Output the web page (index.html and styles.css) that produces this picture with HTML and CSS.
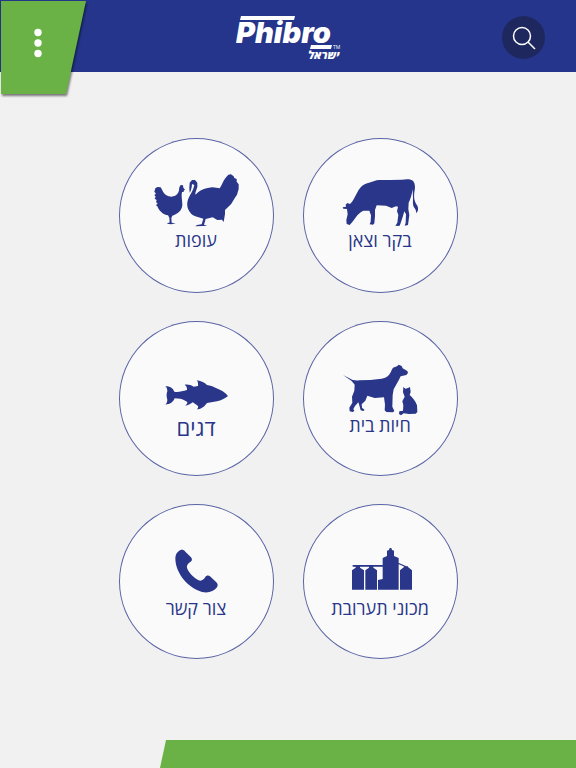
FILE: index.html
```html
<!DOCTYPE html>
<html lang="he" dir="rtl">
<head>
<meta charset="utf-8">
<meta name="viewport" content="width=device-width, initial-scale=1">
<title>Phibro ישראל</title>
<link rel="stylesheet" href="styles.css">
</head>
<body>
<header class="bar">
  <a class="logo" href="#">
    <svg width="108" height="52" viewBox="0 0 108 52" direction="ltr">
      <path d="M7 6H61L60 10H6ZM77 35H98L97 39H76Z"/>
      <text class="logo-name" x="2" y="33">Phibro</text>
      <text class="logo-tm" x="99" y="39">TM</text>
      <text class="logo-country" x="74" y="49">ישראל</text>
    </svg>
  </a>
  <div class="menu">
    <button class="menu-button" type="button" aria-label="תפריט">
      <svg width="8" height="30" viewBox="0 0 8 30"><circle cx="4" cy="4.500" r="3.700"/><circle cx="4" cy="15" r="3.700"/><circle cx="4" cy="25.500" r="3.700"/></svg>
    </button>
  </div>
  <button class="search" type="button" aria-label="חיפוש">
    <svg width="24" height="24" viewBox="0 0 24 24"><circle cx="10" cy="10" r="8.500"/><path d="M16 16L23 23"/></svg>
  </button>
</header>
<main>
  <nav class="tiles">
    <a class="tile" href="#">
      <svg viewBox="-82 -81 465 276"><path d="M37 127L47 125L46 119L51 114L59 117C68 109 74 94 82 80C90 65 100 56 116 53L139 46C151 43 164 46 178 45L215 44C228 42 242 41 249 49C255 57 255 69 252 82C250 96 252 108 257 116C263 123 265 132 262 138L258 145L256 134L250 125C247 117 248 107 248 98L247 73C244 92 240 103 235 113L234 132L237 150L233 180L223 182L226 173L227 148L222 139L217 156L210 177L207 183L195 182L201 173L204 149L200 139L203 125L197 124L184 129L167 122L139 121L134 135L134 153L132 175L128 179L118 178L121 170L122 151L117 137L99 137C91 141 87 145 81 151L66 171L58 180L49 177L48 165L52 148L50 132L39 131Z"/></svg>
      <span class="label">בקר וצאן</span>
    </a>
    <a class="tile" href="#">
      <svg viewBox="-78 -81 465 276"><path d="M28 80L31 70L37 66L47 67L52 76C57 89 68 95 80 95C92 94 100 87 102 76L103 67L107 60L114 61L115 68L120 74L116 77L116 81L111 81C108 93 112 106 112 120C111 137 98 147 82 152L79 159L80 173L92 175L79 178L65 176L74 172L73 158L69 151C54 149 43 139 37 124L33 121L38 115L33 112L35 105L29 101L32 95L28 90L33 86ZM133 70L134 53L141 45L150 45L157 53L157 66L151 84L152 89C164 75 184 68 203 67L224 70C231 60 234 48 242 38L250 29L258 28L266 34L268 39L275 42L275 50L281 58L281 72L276 89L269 100L258 118L240 135L240 147L236 171L231 164L217 165L203 157L182 162L177 179L187 182L172 183L151 184L156 180L170 178L175 161L151 154C132 146 123 125 128 107C130 96 140 84 145 71L148 60L141 57L140 67L137 78L134 83Z"/></svg>
      <span class="label">עופות</span>
    </a>
    <a class="tile low" href="#">
      <svg viewBox="-82 -102 465 276"><path d="M38 60L57 70C66 76 76 78 87 76L120 75L154 71C169 69 179 60 184 45L188 38L200 34L205 29L214 33L217 40L231 48L233 54L228 60L211 64L205 76L190 103L187 120L186 155L192 168L188 172L168 171L163 166L164 149L161 127L133 129L111 122L105 137L94 148L95 158L103 165L99 168L91 166L86 148L84 142L74 153L69 162L72 168L67 171L58 169L57 158L66 143L65 125L72 107L73 89L64 78ZM219 96L225 101L233 99L239 96L241 111L238 120C246 127 256 138 260 151L261 171L256 176L236 177L220 175L212 181L206 177L207 169L218 167L219 151L216 139L223 125L218 112Z"/></svg>
      <span class="label">חיות בית</span>
    </a>
    <a class="tile low" href="#">
      <svg viewBox="-93 -147 465 276"><path d="M46 48C60 49 69 54 73 65C85 67 97 64 111 60C112 53 109 48 104 44C115 43 124 45 131 50L144 48C145 42 144 36 141 31C154 33 164 38 171 45C181 47 188 49 196 53C213 59 226 67 234 78C225 86 213 91 201 94L171 99C166 106 161 111 156 113C151 116 146 118 141 118C144 115 145 111 144 108C139 104 133 101 128 97C121 103 114 106 105 107C110 104 112 101 112 96C105 91 98 87 91 86L74 85C70 96 60 103 46 104C50 100 52 95 52 89C49 80 49 72 52 64C52 57 50 52 46 48Z"/></svg>
      <span class="label large">דגים</span>
    </a>
    <a class="tile low" href="#">
      <svg viewBox="-52 -108 465 276"><path d="M95 149V91L106 83V79H119V83L131 91V149ZM135 149V91L146 83V79H159V83L170 91V149ZM173 149V120L187 117V54L200 48V32L206 30L208 24H213L215 30L221 32V48L235 54V149ZM239 149V91L251 81V79H263V81L275 91V149ZM97 75H188V80H97ZM234 68L258 79L256 82L234 72Z"/></svg>
      <span class="label">מכוני תערובת</span>
    </a>
    <a class="tile low" href="#">
      <svg viewBox="-108 -108 465 276"><path d="M61 55C61 44 66 37 75 31C81 28 87 30 91 35L108 52C112 57 112 62 107 65C99 69 94 76 96 84C101 98 116 113 131 121C140 124 146 119 151 111C154 106 161 105 165 109L184 127C189 132 189 137 186 142C176 155 160 160 141 156C101 145 61 101 61 55Z"/></svg>
      <span class="label">צור קשר</span>
    </a>
  </nav>
</main>
<footer class="strip"></footer>
</body>
</html>
```
FILE: styles.css
```css
* {
  box-sizing: border-box;
}

body {
  display: flex;
  flex-direction: column;
  min-height: 100vh;
  margin: 0;
  background: #f1f1f1;
  color: #293689;
  font-family: "Open Sans", "Noto Sans", sans-serif;
}

button {
  padding: 0;
  border: 0;
  cursor: pointer;
}

.bar {
  position: relative;
  display: flex;
  justify-content: center;
  height: 72px;
  padding-top: 10px;
  background: #25358b;
}

.logo svg {
  display: block;
  overflow: visible;
  fill: #fff;
}

.logo-name {
  font: italic 900 29px Inter, sans-serif;
}

.logo-tm {
  font: 400 5px "Open Sans", sans-serif;
}

.logo-country {
  font: italic 800 11px "Open Sans", sans-serif;
}

.menu {
  position: absolute;
  top: 1px;
  left: 1px;
  filter: drop-shadow(1px 2px 1px rgba(0, 0, 0, 0.5));
}

.menu-button {
  display: flex;
  width: 85px;
  height: 93px;
  padding: 27px 0 0 33px;
  direction: ltr;
  background: #6ab245;
  clip-path: polygon(0 0, 100% 0, 65px 100%, 0 100%);
}

.menu-button svg {
  fill: #fff;
}

.search {
  position: absolute;
  top: 16px;
  right: 31px;
  display: grid;
  place-items: center;
  width: 43px;
  height: 43px;
  border-radius: 50%;
  background: #1e285f;
}

.search svg {
  fill: none;
  stroke: #fff;
  stroke-width: 1.5;
}

main {
  padding: 66px 16px 80px;
}

.tiles {
  display: grid;
  grid-template-columns: repeat(2, 155px);
  justify-content: center;
  gap: 28px 29px;
}

.tile {
  display: flex;
  flex-direction: column;
  align-items: center;
  height: 155px;
  border-radius: 50%;
  background: #fafafa;
  box-shadow: inset 0 0 0 1px #5a64a5;
  color: inherit;
  text-decoration: none;
}

.tile svg {
  flex: none;
  width: 155px;
  height: 92px;
  overflow: visible;
  fill: #293689;
}

.label {
  font-size: 18px;
  line-height: 20px;
  white-space: nowrap;
}

.low .label {
  margin-top: 2px;
}

.label.large {
  font-size: 22px;
  line-height: 24px;
}

.strip {
  height: 28px;
  margin-top: auto;
  margin-left: 160px;
  background: #6ab245;
  clip-path: polygon(6px 0, 100% 0, 100% 100%, 0 100%);
}
```
